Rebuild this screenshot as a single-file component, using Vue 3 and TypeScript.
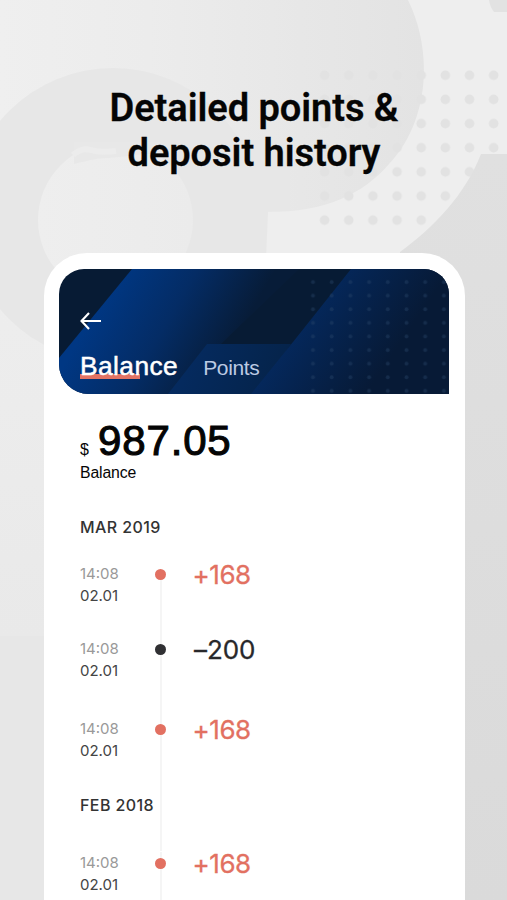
<script setup lang="ts">
interface Entry {
  time: string
  date: string
  amount: string
  spent?: boolean
}

interface Month {
  label: string
  key: string
  entries: Entry[]
}

const months: Month[] = [
  {
    label: 'MAR 2019',
    key: 'mar',
    entries: [
      { time: '14:08', date: '02.01', amount: '+168' },
      { time: '14:08', date: '02.01', amount: '–200', spent: true },
      { time: '14:08', date: '02.01', amount: '+168' },
    ],
  },
  {
    label: 'FEB 2018',
    key: 'feb',
    entries: [{ time: '14:08', date: '02.01', amount: '+168' }],
  },
]
</script>

<template>
  <main class="screen">
    <svg class="backdrop" viewBox="0 0 507 900" aria-hidden="true">
      <defs>
        <linearGradient id="disc" x1="0" x2="1">
          <stop offset="0" stop-color="#efefef" />
          <stop offset="0.35" stop-color="#ececec" />
          <stop offset="1" stop-color="#e3e3e3" />
        </linearGradient>
        <linearGradient id="side" x1="0" x2="0" y1="0" y2="1">
          <stop offset="0" stop-color="#eeeeee" />
          <stop offset="1" stop-color="#e9e9e9" />
        </linearGradient>
        <linearGradient id="right" x1="0" x2="0" y1="0" y2="1">
          <stop offset="0" stop-color="#e0e0e0" />
          <stop offset="1" stop-color="#dadada" />
        </linearGradient>
        <linearGradient id="small" x1="0" x2="1">
          <stop offset="0" stop-color="#eeeeee" />
          <stop offset="1" stop-color="#ebebeb" />
        </linearGradient>
        <pattern id="dots" x="312.5" y="63.2" width="24.15" height="24.15" patternUnits="userSpaceOnUse">
          <circle cx="12.1" cy="12.1" r="4.8" fill="#e2e2e2" />
        </pattern>
      </defs>
      <rect width="507" height="900" fill="#eeeeee" />
      <rect y="250" width="60" height="387" fill="url(#side)" />
      <rect y="636" width="60" height="264" fill="#e7e7e7" />
      <path d="M0 0H408C435 55 427 124 389 164C363 194 326 212 268 212V215H0Z" fill="url(#disc)" />
      <circle cx="113" cy="215" r="147" fill="#e7e7e7" />
      <path d="M193 140H290V211H268L266 260H193Z" fill="#e7e7e7" />
      <circle cx="115.500" cy="220" r="77.500" fill="url(#small)" />
      <path d="M74 142H160V154H144Q112 158 105 158T74 164Z" fill="#e8e8e8" />
      <path d="M73 155Q82 147 91 150T116 151" fill="none" stroke="#ececec" stroke-width="6" />
      <rect x="312.500" y="63.200" width="193" height="169" fill="url(#dots)" />
      <path d="M507 154H481C465 195 434 227 400 252V900H507Z" fill="url(#right)" />
      <path d="M489 0H507V12H494Q490 7 489 0Z" fill="#e2e2e2" />
    </svg>

    <h1 class="headline">Detailed points &amp;<br />deposit history</h1>

    <section class="phone">
      <header class="hero">
        <svg class="hero-art" viewBox="0 0 390 125" preserveAspectRatio="none" aria-hidden="true">
          <defs>
            <linearGradient id="beam" gradientUnits="userSpaceOnUse" x1="37" y1="40" x2="155" y2="108">
              <stop offset="0" stop-color="#003783" />
              <stop offset="0.5" stop-color="#042c65" />
              <stop offset="1" stop-color="#071c38" />
            </linearGradient>
            <linearGradient id="beam2" gradientUnits="userSpaceOnUse" x1="230" y1="55" x2="315" y2="113">
              <stop offset="0" stop-color="#04295f" />
              <stop offset="1" stop-color="#071a36" />
            </linearGradient>
            <linearGradient id="beam3" gradientUnits="userSpaceOnUse" x1="120" y1="85" x2="220" y2="125">
              <stop offset="0" stop-color="#052b61" />
              <stop offset="1" stop-color="#052349" />
            </linearGradient>
            <pattern id="stars" x="244.500" y="6" width="18.700" height="13.600" patternUnits="userSpaceOnUse">
              <circle cx="9.500" cy="7" r="1.900" fill="#294568" opacity="0.42" />
            </pattern>
          </defs>
          <rect width="390" height="125" fill="#071b34" />
          <path d="M73 0H240L110 125H0V89Z" fill="url(#beam)" />
          <path d="M148 75H232L198 125H109Z" fill="url(#beam3)" />
          <path d="M292 0H390V125H192L234 73Z" fill="url(#beam2)" />
          <rect x="244.500" y="6" width="145.500" height="119" fill="url(#stars)" />
        </svg>
        <svg class="back" viewBox="0 0 22 18" role="img" aria-label="Back">
          <path d="M21 9H1.500M9 1L1.500 9L9 17" />
        </svg>
        <nav class="tabs">
          <span class="tab active">Balance</span>
          <span class="tab">Points</span>
        </nav>
      </header>

      <div class="summary">
        <div class="total"><span class="currency">$</span><strong>987.05</strong></div>
        <div class="caption">Balance</div>
      </div>

      <div class="history">
        <section v-for="month in months" :key="month.key" class="month" :class="month.key">
          <h2>{{ month.label }}</h2>
          <div v-for="(entry, i) in month.entries" :key="i" class="entry" :class="{ spent: entry.spent }">
            <div class="when">
              <span class="time">{{ entry.time }}</span>
              <span>{{ entry.date }}</span>
            </div>
            <div class="rail"><i class="dot"></i></div>
            <span class="amount">{{ entry.amount }}</span>
          </div>
        </section>
      </div>
    </section>
  </main>
</template>

<style>
body {
  margin: 0;
  overflow: hidden;
}
</style>

<style scoped>
.screen {
  position: relative;
  box-sizing: border-box;
  width: 507px;
  height: 900px;
  overflow: hidden;
  padding-top: 86px;
  color: #050505;
  font-family: Inter, "Liberation Sans", sans-serif;
}
.backdrop {
  position: absolute;
  inset: 0;
  width: 507px;
  height: 900px;
}
.headline {
  position: relative;
  margin: 0 0 0 1px;
  height: 167px;
  font: 600 38px/45px Roboto, sans-serif;
  letter-spacing: -0.050px;
  text-align: center;
  color: #050505;
  -webkit-text-stroke: 0.300px #050505;
}
.phone {
  position: relative;
  box-sizing: border-box;
  width: 421px;
  height: 680px;
  margin-left: 43.500px;
  padding: 16px 15.500px 0;
  border-radius: 43px 43px 0 0;
  background: #fff;
}
.hero {
  position: relative;
  box-sizing: border-box;
  height: 125px;
  padding: 43px 21px 0;
  border-radius: 25px 25px 0 30px;
  overflow: hidden;
}
.hero-art {
  position: absolute;
  inset: 0;
  width: 100%;
  height: 100%;
}
.back {
  position: relative;
  display: block;
  width: 22px;
  height: 18px;
  fill: none;
  stroke: #fff;
  stroke-width: 2.100;
}
.tabs {
  position: relative;
  display: flex;
  align-items: baseline;
  gap: 25px;
  height: 50px;
  margin-top: 20px;
  font-family: "Liberation Sans", sans-serif;
}
.tab {
  font-size: 21px;
  letter-spacing: -0.350px;
  line-height: 32px;
  color: #bccae3;
}
.active {
  font-size: 26.300px;
  letter-spacing: 0.450px;
  color: #fff;
  -webkit-text-stroke: 0.500px #fff;
  background: linear-gradient(#e27364, #e27364) 0 24px / 60px 5px no-repeat;
}
.summary {
  box-sizing: border-box;
  padding: 24px 21px 0;
  height: 121px;
}
.total {
  display: flex;
  align-items: baseline;
  height: 45px;
}
.currency {
  width: 18px;
  font: 16px "Liberation Sans", sans-serif;
}
strong {
  font: 400 42px/46px "Liberation Sans", sans-serif;
  letter-spacing: 0.850px;
  -webkit-text-stroke: 1.100px #050505;
}
.caption {
  font: 15.800px/20px "Liberation Sans", sans-serif;
  letter-spacing: -0.150px;
}
.month h2 {
  margin: 0;
  padding-left: 21px;
  height: 48px;
  font-size: 16px;
  line-height: 24px;
  font-weight: 500;
  letter-spacing: 0.400px;
  color: #333;
}
.month.feb h2 {
  height: 58px;
  background: linear-gradient(#f5f5f5, #f5f5f5) 100.500px 0 / 2px 100% no-repeat;
}
.entry {
  display: flex;
  height: 75px;
}
.entry.spent {
  height: 80px;
}
.when {
  display: flex;
  flex-direction: column;
  width: 92px;
  padding-left: 21px;
  box-sizing: border-box;
  font-size: 15px;
  line-height: 22px;
  color: #444;
}
.time {
  color: #999;
}
.rail {
  display: flex;
  justify-content: center;
  width: 19px;
  background: linear-gradient(#f5f5f5, #f5f5f5) center / 2px 100% no-repeat;
}
.mar .entry:nth-child(2) .rail {
  background-position: center 11px;
}
.dot {
  width: 11px;
  height: 11px;
  margin-top: 6px;
  border-radius: 50%;
  background: #e27061;
}
.amount {
  padding-left: 22.500px;
  font-size: 26px;
  line-height: 24px;
  letter-spacing: -0.450px;
  color: #e27061;
  -webkit-text-stroke: 0.300px currentColor;
}
.spent .dot {
  background: #303033;
}
.spent .amount {
  padding-left: 24px;
  letter-spacing: -0.100px;
  color: #28282b;
}
.feb .entry {
  padding-top: 0.500px;
}
</style>
